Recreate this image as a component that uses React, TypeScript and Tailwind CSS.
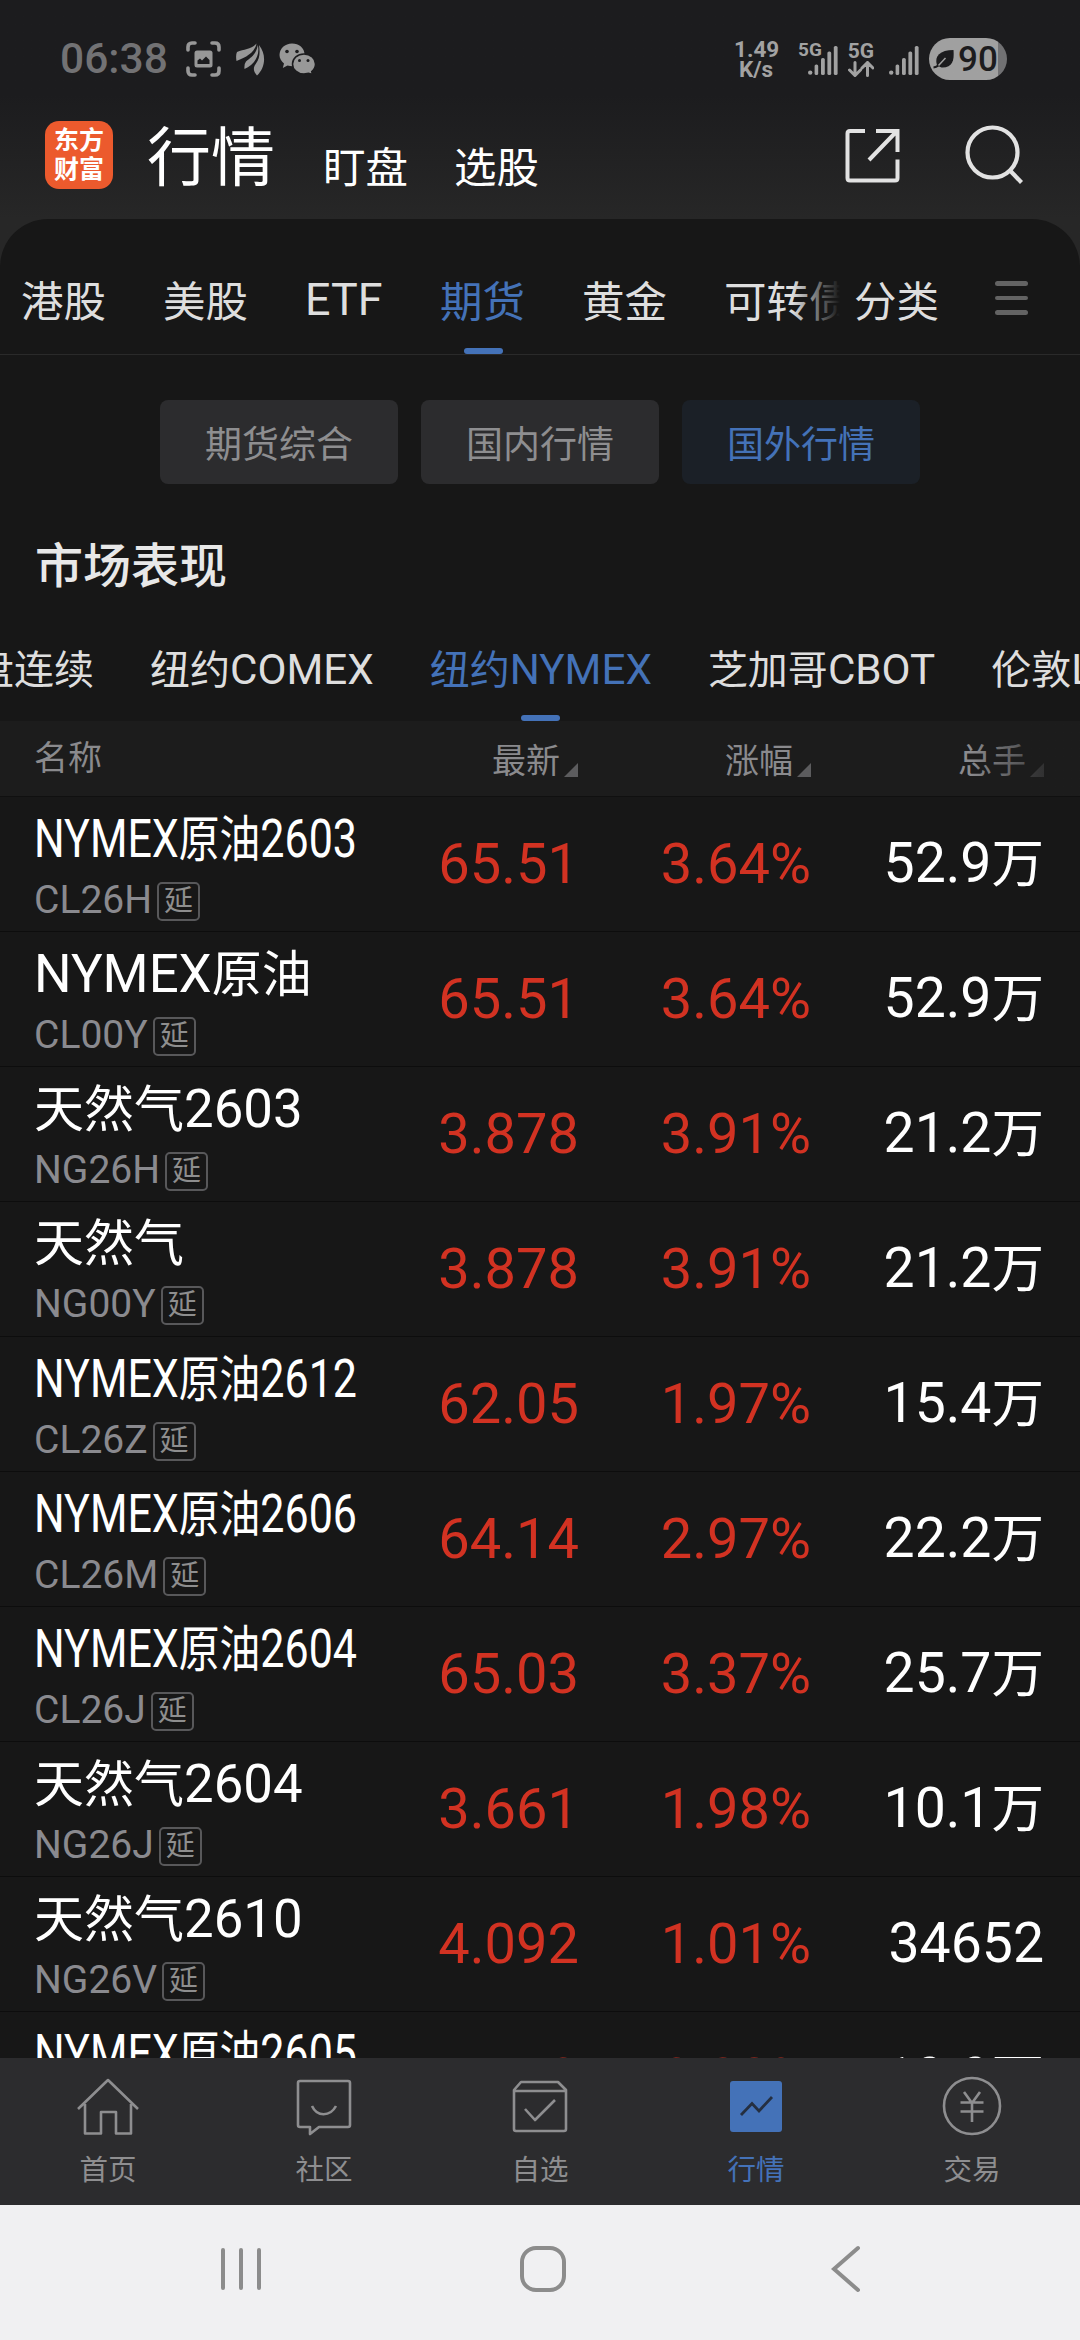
import React from "react";

interface Quote {
  name: string;
  code: string;
  price: string;
  change: string;
  volume: string;
  squeezed?: boolean;
}

const quotes: Quote[] = [
  { name: "NYMEX原油2603", code: "CL26H", price: "65.51", change: "3.64%", volume: "52.9万", squeezed: true },
  { name: "NYMEX原油", code: "CL00Y", price: "65.51", change: "3.64%", volume: "52.9万" },
  { name: "天然气2603", code: "NG26H", price: "3.878", change: "3.91%", volume: "21.2万" },
  { name: "天然气", code: "NG00Y", price: "3.878", change: "3.91%", volume: "21.2万" },
  { name: "NYMEX原油2612", code: "CL26Z", price: "62.05", change: "1.97%", volume: "15.4万", squeezed: true },
  { name: "NYMEX原油2606", code: "CL26M", price: "64.14", change: "2.97%", volume: "22.2万", squeezed: true },
  { name: "NYMEX原油2604", code: "CL26J", price: "65.03", change: "3.37%", volume: "25.7万", squeezed: true },
  { name: "天然气2604", code: "NG26J", price: "3.661", change: "1.98%", volume: "10.1万" },
  { name: "天然气2610", code: "NG26V", price: "4.092", change: "1.01%", volume: "34652" },
  { name: "NYMEX原油2605", code: "CL26K", price: "64.63", change: "3.28%", volume: "19.9万", squeezed: true },
];

// Latin runs are set a little larger than the Chinese around them
function Mixed({ text }: { text: string }) {
  return (
    <>
      {text.split(/([A-Z0-9.%]+)/).filter(Boolean).map((part, i) =>
        /^[A-Z0-9.%]/.test(part) ? (
          <span key={i} className="text-[1.055em]">{part}</span>
        ) : (
          <span key={i}>{part}</span>
        )
      )}
    </>
  );
}

function Signal() {
  return (
    <svg className="w-[30px] h-[29px]" viewBox="0 0 30 29" fill="#a2a2a2">
      <circle cx="2.2" cy="26.6" r="2.2" />
      <rect x="6.6" y="18.5" width="3.6" height="10.5" rx="1.6" />
      <rect x="13" y="12" width="3.8" height="17" rx="1.6" />
      <rect x="19.4" y="5.5" width="3.8" height="23.5" rx="1.6" />
      <rect x="25.8" y="0" width="3.8" height="29" rx="1.6" />
    </svg>
  );
}

function StatusBar() {
  return (
    <div className="flex items-center h-[118px] pl-[60px] pr-[73px] text-[#a2a2a2]">
      <span className="w-[126px] text-[42.5px] leading-none font-medium text-[#727274]">06:38</span>
      <svg className="w-[35px] h-[36px]" viewBox="0 0 35 36" fill="none" stroke="#989898" strokeWidth="3.6" strokeLinecap="round">
        <path d="M2 9V6Q2 2 6 2H9M26 2H29Q33 2 33 6V9M33 27V30Q33 34 29 34H26M9 34H6Q2 34 2 30V27" />
        <rect x="8.5" y="9.5" width="18" height="17" rx="2.5" fill="#989898" stroke="none" />
        <path d="M11.500 23V19.500L14 17.500L16 19.500L20 15.500L23.500 19V23Z" fill="#1c1c1e" stroke="none" />
      </svg>
      <svg className="ml-[15px] w-[29px] h-[33px]" viewBox="0 0 29 33" fill="#989898">
        <path d="M0.5 18Q-0.5 12 1 9C8 6 15 7 20.5 0.5C19 9 11 14 0.5 18Z" />
        <path d="M8.5 26Q8 21 10 18.5C15 14 20 12 21.8 2C24.5 14 17 22 8.5 26Z" />
        <path d="M21 32.5C17 28 17 24.5 20 20.5C24 15 24 9 23 2C31 12 29 25 21 32.5Z" />
      </svg>
      <svg className="ml-[14px] w-[37px] h-[32px]" viewBox="0 0 37 32">
        <path d="M13 0.5C6 0.5 0.5 5.5 0.5 12C0.5 15.5 2.5 18.5 5 20.5L3.8 25L8.5 22.5C20 25.5 25.5 18 25.5 11.5C25.5 5 20 0.5 13 0.5Z" fill="#989898" />
        <path d="M25 11C18.5 11 13.5 15.5 13.5 21C13.5 26.5 18.5 31 25 31L29.5 30.2L33.5 31.5L32.7 28.5C35 26.7 36.5 24 36.5 21C36.5 15.5 31.5 11 25 11Z" fill="#989898" stroke="#1c1c1e" strokeWidth="1.5" />
        <g fill="#1c1c1e">
          <circle cx="8" cy="8.5" r="1.8" />
          <circle cx="18" cy="8.5" r="1.8" />
          <circle cx="20.5" cy="17.5" r="1.5" />
          <circle cx="29" cy="17.5" r="1.5" />
        </g>
      </svg>
      <div className="ml-auto flex items-center">
        <div className="w-[44px] text-center text-[22.5px] leading-[20px] font-bold">
          <div>1.49</div>
          <div>K/s</div>
        </div>
        <div className="relative ml-[30px] mt-[3px] h-[29px]">
          <Signal />
          <span className="absolute -left-[10px] -top-[6px] text-[19px] leading-none font-bold">5G</span>
        </div>
        <div className="ml-[10px] w-[26px] flex flex-col items-center">
          <span className="text-[21px] leading-[20px] font-bold">5G</span>
          <svg className="w-[26px] h-[16px]" viewBox="0 0 26 16" fill="none" stroke="#a2a2a2" strokeWidth="3" strokeLinecap="round">
            <path d="M7 1.5V14M1.5 9L7 14.5L12.5 9M19.5 14.5V2M14 7L19.5 1.5L25 7" />
          </svg>
        </div>
        <div className="ml-[15px] mt-[3px] h-[29px]">
          <Signal />
        </div>
        <div className="ml-[10px] w-[78px] h-[42px] rounded-full overflow-hidden flex items-center bg-gradient-to-r from-[#a0a0a0] from-[89%] to-[#717173] to-[89%]">
          <svg className="ml-[4px] w-[22px] h-[20px]" viewBox="0 0 22 20">
            <path d="M4 16.5C1 7 7 1 20.5 1C21.5 12 19 19 8.500 18.5Z" fill="#1c1c1e" />
            <path d="M0.5 18.5C5 18 8 15 12.5 9.5" stroke="#1c1c1e" strokeWidth="2" fill="none" />
            <path d="M5.5 16.5L12.5 9" stroke="#a0a0a0" strokeWidth="1.5" />
          </svg>
          <span className="ml-[3px] text-[35px] leading-none font-medium text-[#1c1c1e]">90</span>
        </div>
      </div>
    </div>
  );
}

function Header() {
  return (
    <div className="flex h-[101px] pl-[45px] pr-[55px] text-white">
      <div className="mt-[3px] w-[68px] h-[68px] rounded-[14px] bg-[#ec5a2d] flex flex-col items-center justify-center text-[25px] leading-[29px] font-bold">
        <span>东方</span>
        <span>财富</span>
      </div>
      <span className="ml-[34px] mt-[9px] w-[128px] text-[64px] leading-[64px]">行情</span>
      <span className="ml-[48px] mt-[30px] text-[42.5px] leading-[42px]">盯盘</span>
      <span className="ml-[46px] mt-[30px] text-[42.5px] leading-[42px]">选股</span>
      <svg className="ml-auto mt-[10px] w-[55px] h-[55px]" viewBox="0 0 55 55" fill="none" stroke="#e2e2e2" strokeWidth="4">
        <path d="M20 3H5Q2.5 3 2.5 5.5V50Q2.5 52.5 5 52.5H50Q52.5 52.5 52.5 50V31.5" />
        <path d="M31 3H52.5V24M52 3L24 32" />
      </svg>
      <svg className="ml-[65px] mt-[7px] w-[60px] h-[60px]" viewBox="0 0 60 60" fill="none" stroke="#e2e2e2" strokeWidth="4.2">
        <circle cx="27.5" cy="27.5" r="25" />
        <path d="M45 45.5L56.5 57.5" />
      </svg>
    </div>
  );
}

function CategoryTabs() {
  return (
    <div className="flex items-center h-[136px] shrink-0 border-b border-[#2a2a2a] text-[42.5px] leading-[60px] text-[#dedede] whitespace-nowrap">
      <div className="relative w-[840px] h-full flex items-center overflow-hidden pl-[21px] pt-[32px]">
        <span className="w-[142px] shrink-0">港股</span>
        <span className="w-[142px] shrink-0">美股</span>
        <span className="w-[135px] shrink-0 -mt-[5px]"><Mixed text="ETF" /></span>
        <span className="w-[142px] shrink-0 text-[#4472b8]">期货</span>
        <span className="w-[142px] shrink-0">黄金</span>
        <span className="shrink-0">可转债</span>
        <span className="absolute left-[464px] bottom-0 w-[39px] h-[6px] rounded-full bg-[#4472b8]"></span>
        <span className="absolute right-0 top-0 w-[48px] h-full bg-gradient-to-r from-transparent to-[#171717]"></span>
      </div>
      <span className="ml-[14px] pt-[32px]">分类</span>
      <div className="ml-[56px] mt-[23px] flex flex-col gap-[10px]">
        <span className="w-[33px] h-[4.5px] rounded-full bg-[#636363]"></span>
        <span className="w-[33px] h-[4.5px] rounded-full bg-[#636363]"></span>
        <span className="w-[33px] h-[4.5px] rounded-full bg-[#636363]"></span>
      </div>
    </div>
  );
}

function Filters() {
  const base = "w-[238px] h-[84px] pt-[7px] rounded-[8px] flex items-center justify-center";
  return (
    <div className="mt-[45px] flex justify-center gap-[23px] text-[37px] leading-none">
      <span className={`${base} bg-[#2c2c2e] text-[#8e8e90]`}>期货综合</span>
      <span className={`${base} bg-[#2c2c2e] text-[#8e8e90]`}>国内行情</span>
      <span className={`${base} bg-[#1b2027] text-[#4472b8]`}>国外行情</span>
    </div>
  );
}

function ExchangeTabs() {
  return (
    <div className="relative h-[108px] shrink-0 flex items-center gap-[56px] -ml-[26px] pt-[7px] text-[40px] leading-[60px] text-[#dedede] whitespace-nowrap">
      <span>盘连续</span>
      <span><Mixed text="纽约COMEX" /></span>
      <span className="text-[#4472b8]"><Mixed text="纽约NYMEX" /></span>
      <span><Mixed text="芝加哥CBOT" /></span>
      <span><Mixed text="伦敦LME" /></span>
      <span className="absolute left-[547px] bottom-0 w-[39px] h-[6px] rounded-full bg-[#4472b8]"></span>
    </div>
  );
}

function SortTitle({ label, className }: { label: string; className: string }) {
  return (
    <div className={`flex items-end justify-end ${className}`}>
      <span>{label}</span>
      <svg className="ml-[4px] mb-[1px] w-[14px] h-[14px]" viewBox="0 0 14 14" fill="#5c5c5e">
        <path d="M14 0V14H0Z" />
      </svg>
    </div>
  );
}

function QuoteRow({ quote }: { quote: Quote }) {
  return (
    <div className="h-[135px] shrink-0 flex border-b border-[#0d0d0d]">
      <div className="w-[360px] pl-[34px] whitespace-nowrap">
        <div className={`mt-[12px] text-[50px] leading-[60px] text-white ${quote.squeezed ? "w-[400px] origin-left scale-x-[0.815]" : ""}`}>
          <Mixed text={quote.name} />
        </div>
        <div className="mt-[8px] flex items-center text-[39px] leading-[44px] text-[#8a8a8f]">
          <span>{quote.code}</span>
          <span className="ml-[5px] mt-[2px] w-[43px] h-[39px] flex items-center justify-center rounded-[5px] border-2 border-[#58585a] text-[29px] leading-none text-[#8e8e8e]">延</span>
        </div>
      </div>
      <span className="w-[219px] pt-[34px] text-right text-[56px] leading-[66px] text-[#d23222]">{quote.price}</span>
      <span className="w-[232px] pt-[34px] text-right text-[56px] leading-[66px] text-[#d23222]">{quote.change}</span>
      <span className="w-[233px] pt-[34px] text-right text-[52.5px] leading-[66px] text-white"><Mixed text={quote.volume} /></span>
    </div>
  );
}

function BottomNav() {
  const item = "flex-1 flex flex-col items-center";
  const label = "mt-[18px] text-[28.5px] leading-[34px]";
  return (
    <div className="h-[147px] shrink-0 flex pt-[18px] bg-[#2c2c2e] text-[#8e8e90]">
      <div className={item}>
        <svg className="w-[62px] h-[60px]" viewBox="0 0 62 60" fill="none" stroke="#8e8e90" strokeWidth="2.6" strokeLinejoin="round">
          <path d="M1 33L31 4L61 33M8 28V57.5H24V36H39V57.5H54V28" />
        </svg>
        <span className={label}>首页</span>
      </div>
      <div className={item}>
        <svg className="w-[62px] h-[60px]" viewBox="0 0 62 60" fill="none" stroke="#8e8e90" strokeWidth="2.6" strokeLinejoin="round">
          <path d="M7 5H55Q57 5 57 7V49Q57 51 55 51H26L17 58V51H7Q5 51 5 49V7Q5 5 7 5Z" />
          <path d="M19 30C24 41 37 41 43 30" />
        </svg>
        <span className={label}>社区</span>
      </div>
      <div className={item}>
        <svg className="w-[62px] h-[60px]" viewBox="0 0 62 60" fill="none" stroke="#8e8e90" strokeWidth="2.6" strokeLinejoin="round">
          <path d="M12 6H49L57 14V53Q57 55 55 55H7Q5 55 5 53V14Z M5 15H57" />
          <path d="M16 33L26 44L46 24" />
        </svg>
        <span className={label}>自选</span>
      </div>
      <div className={`${item} text-[#4472b8]`}>
        <svg className="w-[62px] h-[60px]" viewBox="0 0 62 60" fill="none">
          <rect x="5" y="5" width="52" height="51" rx="3" fill="#4472b8" />
          <path d="M16 39L27 27.5L34 35L47 21" stroke="#252f40" strokeWidth="2.8" />
        </svg>
        <span className={label}>行情</span>
      </div>
      <div className={item}>
        <svg className="w-[62px] h-[60px]" viewBox="0 0 62 60" fill="none" stroke="#8e8e90" strokeWidth="2.6">
          <circle cx="31" cy="30" r="28" />
          <path d="M23 16L31 27L39 16M31 27V46M19.5 26.5H42.5M19.5 35.5H42.5" />
        </svg>
        <span className={label}>交易</span>
      </div>
    </div>
  );
}

function SystemNav() {
  return (
    <div className="h-[135px] shrink-0 flex pt-[40px] pl-[221px] bg-[#f0f0f2]">
      <svg className="w-[40px] h-[46px]" viewBox="0 0 40 46" stroke="#8c8c8c" strokeWidth="4" strokeLinecap="round">
        <path d="M2 5V43M20 5V43M38 5V43" />
      </svg>
      <svg className="ml-[259px] w-[46px] h-[47px]" viewBox="0 0 46 47" fill="none" stroke="#8c8c8c" strokeWidth="4">
        <rect x="2" y="3" width="42" height="42" rx="14" />
      </svg>
      <svg className="ml-[265px] w-[30px] h-[48px]" viewBox="0 0 30 48" fill="none" stroke="#8c8c8c" strokeWidth="4" strokeLinecap="round">
        <path d="M27 3L3 24L27 45" />
      </svg>
    </div>
  );
}

export default function App() {
  return (
    <div className="w-[1080px] h-[2340px] flex flex-col overflow-hidden bg-gradient-to-b from-[#1c1c1e] from-[95px] to-[#272727] to-[219px] font-['Roboto','Noto_Sans_CJK_SC',sans-serif]">
      <StatusBar />
      <Header />
      <div className="flex-1 min-h-0 flex flex-col overflow-hidden rounded-t-[48px] bg-[#171717]">
        <CategoryTabs />
        <Filters />
        <h2 className="mt-[53px] pl-[35px] h-[76px] shrink-0 text-[48px] leading-[60px] font-medium text-[#e8e8e8]">市场表现</h2>
        <ExchangeTabs />
        <div className="relative h-[76px] shrink-0 flex border-b border-[#101010] bg-[#1c1c1c] text-[34px] leading-[34px] text-[#8a8a8d]">
          <span className="w-[360px] pl-[34px] pt-[20px]">名称</span>
          <SortTitle label="最新" className="w-[218px] h-[57px]" />
          <SortTitle label="涨幅" className="w-[233px] h-[57px]" />
          <SortTitle label="总手" className="w-[233px] h-[57px]" />
          <span className="absolute right-0 top-0 w-[110px] h-[75px] bg-gradient-to-r from-transparent to-[#1c1c1c]"></span>
        </div>
        <div className="flex-1 min-h-0 flex flex-col overflow-hidden">
          {quotes.map((q) => (
            <QuoteRow key={q.code} quote={q} />
          ))}
        </div>
      </div>
      <BottomNav />
      <SystemNav />
    </div>
  );
}
